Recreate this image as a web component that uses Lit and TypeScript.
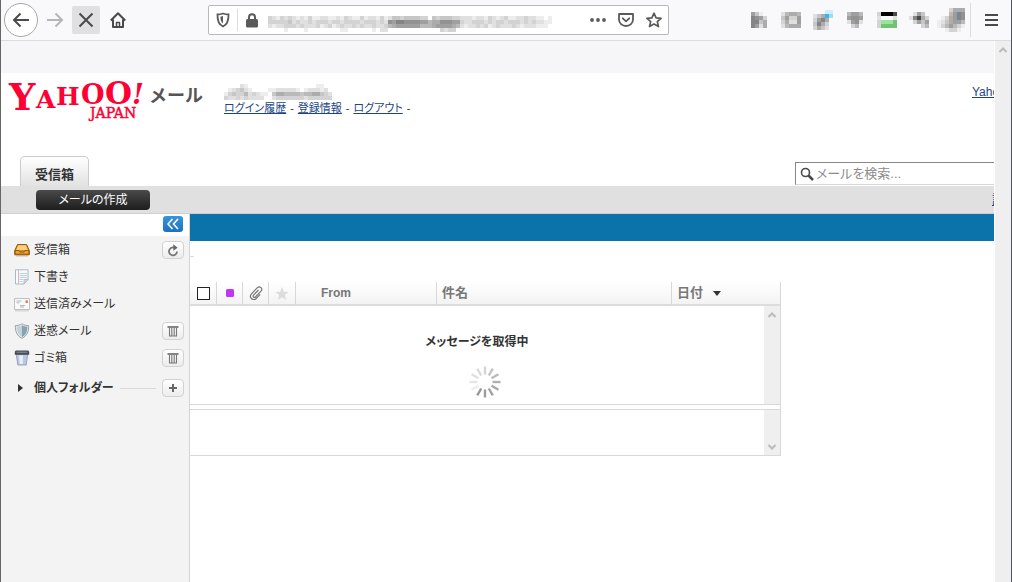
import { LitElement, html, svg, css } from "lit";
import { customElement, property } from "lit/decorators.js";

/* Colour for one mosaic cell: digits are shades of grey, letters are tints. */
const TINTS: Record<string, string> = {
  k: "#4a4a4a", x: "#000000", b: "#cdeefb", c: "#9bdcf6", d: "#3cb4ea",
  g: "#98e698", h: "#74c274", s: "#75879a", t: "#a39a90",
};
const shade = (c: string) => {
  if (TINTS[c]) return TINTS[c];
  const v = 250 - Number(c) * 13;
  return `rgb(${v},${v},${v})`;
};

@customElement("pixel-mosaic")
export class PixelMosaic extends LitElement {
  @property({ attribute: false }) rows: string[] = [];
  static styles = css`
    :host { display: block; line-height: 0; }
    svg { display: block; }
  `;
  render() {
    const w = Math.max(...this.rows.map((r) => r.length)) * 4;
    const h = this.rows.length * 4;
    return html`<svg width=${w} height=${h} shape-rendering="crispEdges" aria-hidden="true">
      ${this.rows.map((row, y) =>
        [...row].map((c, x) =>
          c === "0" ? "" : svg`<rect x=${x * 4} y=${y * 4} width="4" height="4" fill=${shade(c)}></rect>`
        )
      )}
    </svg>`;
  }
}

const URL_ROWS = [
  "321323212131122112132113122131244344443304344433222122132123112232211010",
  "333334232232333233233332333232879988887756688877322333232332333232322110",
  "212233323222312312322323223223567777775556777765212232312322232122211100",
  "000010000100000000110000001022000000000000032330000000000000000000000000",
];
const NAME_ROWS = [
  "000021000000000000000001100",
  "012342100001122222101222120",
  "134335232110466555545566432",
  "322323222200233333332333333",
];
const EXTENSIONS = [
  { name: "Library", rows: ["7410", "9873", "9946", "9726"] },
  { name: "Sidebars", rows: ["25665", "47337", "36227", "25666"] },
  { name: "Extension 1", rows: ["000bb", "246dc", "37960", "49630", "36420"] },
  { name: "Extension 2", rows: ["5775", "7887", "2782", "0350"] },
  { name: "Extension 3", rows: ["3xxxk", "20002", "3gggh", "3hhhh"] },
  { name: "Extension 4", rows: ["02740", "29k63", "03747", "00035"] },
  { name: "Extension 5", rows: ["0003666", "0005ts8", "0136ts8", "1246775", "1357531", "0013310"] },
];

const ICONS: Record<string, unknown> = {
  inbox: svg`<path d="M2 14h12" stroke="#c4c4c4"/><path d="M3.500 2.500h9L15.300 8.500v4.300H.7V8.500z" fill="#d98d1d" stroke="#9c5a0a"/>
    <path d="M4.200 3.300h7.600l2 4.700H2.200z" fill="#f7cf80"/><path d="M1.200 8.500H5l1 1.600h4l1-1.600h3.800v3.700H1.200z" fill="#eaa032" stroke="#8a4d08" stroke-width=".8"/>`,
  draft: svg`<path d="M1.500 .8h12.500v9.700l-4 4.500H1.500z" fill="#f7fbff" stroke="#a9b8c6"/><path d="M4.500 1v13.500" stroke="#e79a9a" stroke-width=".8"/>
    <path d="M5.500 4.500h7.500M5.500 6.500h7.500M5.500 8.500h7.500M5.500 10.500h4M5.500 12.500h3" stroke="#b5d0e8"/><path d="M14 10.500l-4 4.500v-4.500z" fill="#d3dce4" stroke="#a9b8c6" stroke-width=".8"/>`,
  sent: svg`<path d="M.5 2.500h15v11H.5z" fill="#fafafa" stroke="#c0c0c0"/><path d="M1 14.800h14" stroke="#ccc"/>
    <path d="M2.500 5h5M2.500 6.800h3M6 9.500h5M6 11h4" stroke="#a7b1ba" stroke-width=".9"/><path d="M11.500 4.300h2.300v2.700h-2.300z" fill="#d9795b"/>`,
  spam: svg`<path d="M8 .8c2 1.300 4.300 1.800 6.600 1.800C14.800 8.500 13 13 8 15.300 3 13 1.200 8.500 1.400 2.600 3.700 2.600 6 2.100 8 .8z" fill="#e6ebee" stroke="#98a2a8"/>
    <path d="M8 2.200c1.800 1 3.500 1.400 5.400 1.500C13.400 8.500 12 12 8 14z" fill="#86a3b2"/><path d="M8 2.200v11.800C4.500 12 3 9 2.700 3.700 4.500 3.600 6.200 3.200 8 2.200z" fill="#c3d1d8"/>`,
  trash: svg`<path d="M2.200 4h11.600l-1.600 11H3.800z" fill="#b9c7e2" stroke="#8b98b4" stroke-width=".8"/><path d="M5 5.500h4l-.3 8.500H5.800z" fill="#eaf0fb"/>
    <path d="M.8 1.800l1-1.200h12.400l1 1.200v2.900H.8z" fill="#454b55"/><path d="M2.500 1.700h11v1h-11z" fill="#8e96a3"/>`,
};

const ACTIONS: Record<string, unknown> = {
  reload: svg`<path d="M11 8.500A4 4 0 1 1 8 4.500" fill="none" stroke="#777" stroke-width="1.800"/><path d="M7.300 1.300l4.300 3.400-4.300 3z" fill="#666"/>`,
  empty: svg`<path d="M1.500 3h11" stroke="#777" stroke-width="1.800"/><path d="M3.500 4v8h7V4M5.800 4v8M8.200 4v8" fill="none" stroke="#777" stroke-width="1.100"/>`,
  add: svg`<path d="M7 3v8M3 7h8" stroke="#666" stroke-width="2"/>`,
};

@customElement("folder-row")
export class FolderRow extends LitElement {
  @property() icon = "";
  @property() label = "";
  @property() action = "";
  @property({ attribute: "action-label" }) actionLabel = "";
  static styles = css`
    :host { display: flex; align-items: center; height: 27px; padding: 0 5px 0 13px; font-size: 12px; }
    .name { flex: 1; display: flex; align-items: center; gap: 4px; color: #333; text-decoration: none; }
    .icon { width: 16px; height: 16px; }
    .tool { display: grid; place-items: center; width: 22px; height: 18px; padding: 0; box-sizing: border-box;
      border: 1px solid #d2d2d2; border-radius: 4px; background: linear-gradient(#fff, #ececec); }
  `;
  render() {
    return html`<a class="name" href="#"><svg class="icon" viewBox="0 0 16 16" aria-hidden="true">${ICONS[this.icon]}</svg>${this.label}</a>
      ${this.action
        ? html`<button class="tool" aria-label=${this.actionLabel}><svg width="14" height="14" viewBox="0 0 14 14">${ACTIONS[this.action]}</svg></button>`
        : ""}`;
  }
}

const FOLDERS = [
  { icon: "inbox", label: "受信箱", action: "reload", hint: "更新" },
  { icon: "draft", label: "下書き", action: "", hint: "" },
  { icon: "sent", label: "送信済みメール", action: "", hint: "" },
  { icon: "spam", label: "迷惑メール", action: "empty", hint: "空にする" },
  { icon: "trash", label: "ゴミ箱", action: "empty", hint: "空にする" },
];

const SPOKES = ["#d4d4d4", "#c4c4c4", "#bababa", "#b0b0b0", "#a8a8a8", "#a2a2a2", "#9c9c9c", "#989898", "#ececec", "#e6e6e6", "#e0e0e0", "#dadada"];

@customElement("app-root")
export class AppRoot extends LitElement {
  static styles = css`
    :host { display: flex; flex-direction: column; min-height: 100vh; box-sizing: border-box;
      border-left: 1px solid #666; border-right: 1px solid #4a5560; background: #fff; color: #333;
      font: 13px/16px "Liberation Sans", "Noto Sans CJK JP", sans-serif; font-feature-settings: "palt"; }
    button, input { font: inherit; color: inherit; }
    a { color: #1c4587; }
    svg { display: block; }

    .browser { display: flex; align-items: center; height: 40px; padding-left: 3px; background: #f9f9fb; border-bottom: 1px solid #dcdcde; }
    .nav { display: grid; place-items: center; width: 28px; height: 28px; padding: 0; border: 0; border-radius: 2px; background: none; }
    .navs { display: flex; align-items: center; gap: 4px; }
    .back { width: 34px; height: 34px; border: 1px solid #a8a8a8; border-radius: 50%; background: #fff; }
    .forward { width: 26px; }
    .stop { background: #e0e0e2; }
    .address { position: relative; display: flex; align-items: center; flex: 0 1 461px; height: 30px; margin-left: 76px; padding: 0 0 0 3px;
      box-sizing: border-box; border: 1px solid #b9b9bb; border-radius: 2px; background: #fff; }
    .address .nav { height: 22px; }
    .address .shield { width: 22px; }
    .address .lock { margin-left: 3px; border-left: 1px solid #ddd; border-radius: 0; }
    .url { flex: 1; min-width: 0; height: 24px; border: 0; padding: 0 4px; outline: 0; background: none; }
    .veil { position: absolute; left: 59px; top: 10px; }
    .extensions { display: flex; align-items: center; margin-left: auto; height: 34px; padding-right: 3px; border-right: 1px solid #ddd; }
    .extension { display: grid; place-items: center; width: 32px; height: 32px; padding: 0; border: 0; background: none; }
    .menu { width: 40px; }

    .viewport { display: flex; flex: 1; }
    .window { flex: 1; min-width: 0; display: flex; flex-direction: column; overflow: hidden; }
    .page { display: flex; flex-direction: column; flex: 1; width: calc(100% + 60px); }
    .scroll { display: flex; justify-content: center; width: 17px; padding-top: 6px; box-sizing: border-box;
      border-left: 1px solid #fff; background: #efefef; }

    .banner { height: 32px; background: #f6f6f8; }
    .masthead { display: flex; align-items: flex-start; height: 83px; padding-left: 7px; }
    .logo { margin-top: 6px; overflow: visible; }
    .product { margin: 10px 0 0 4px; font-size: 18px; line-height: 26px; font-weight: 700; color: #555; font-feature-settings: normal; }
    .account { margin: 11px 0 0 21px; font-size: 11px; line-height: 14px; }
    .account nav { display: flex; gap: 4px; margin-top: 1px; }
    .portal { margin: 11px 9px 0 auto; font-size: 12px; width: 73px; white-space: nowrap; }

    .tabs { display: flex; align-items: flex-end; justify-content: space-between; padding: 0 8px 0 19px; }
    .tab { width: 69px; height: 30px; box-sizing: border-box; padding: 6px 0 0; border: 1px solid #ccc; border-bottom: 0;
      border-radius: 5px 5px 0 0; background: linear-gradient(#fff, #e2e2e2); font-weight: 700; }
    .search { display: flex; align-items: center; gap: 2px; width: 251px; height: 23px; margin-bottom: 1px; padding-left: 4px;
      box-sizing: border-box; border: 1px solid #888; border-bottom-color: #d6d6d6; background: #fff; }
    .query { flex: 1; min-width: 0; height: 20px; padding: 0; border: 0; outline: 0; background: none; }
    .query::placeholder { color: #8c8c8c; opacity: 1; }
    .actions { display: flex; align-items: center; justify-content: space-between; height: 27px; padding: 0 36px 0 35px;
      background: #e0e0e0; border-bottom: 1px solid #cfcfcf; }
    .compose { width: 114px; height: 20px; padding: 0; border: 0; border-radius: 4px; color: #fff;
      background: linear-gradient(#4a4a4a, #1d1d1d); font-size: 12px; line-height: 20px; }

    .mail { display: flex; flex: 1; }
    .side { flex: none; width: 189px; box-sizing: border-box; border-right: 1px solid #d4d4d4; background: #f3f3f3; }
    .sidehead { display: flex; justify-content: flex-end; height: 22px; padding: 2px 6px 0 0; box-sizing: border-box; background: #fff; }
    .collapse { display: grid; place-items: center; width: 20px; height: 16px; padding: 0; border: 0; border-radius: 3px;
      background: linear-gradient(#3796e0, #1f70c0); }
    .personal { display: flex; align-items: center; height: 34px; padding: 0 5px 0 17px; font-size: 12px; font-weight: 700; }
    .personal span { margin: 0 6px 0 11px; }
    .rule { flex: 1; height: 1px; background: #d9d9d9; margin-right: 6px; }
    .tool { display: grid; place-items: center; width: 22px; height: 18px; padding: 0; box-sizing: border-box;
      border: 1px solid #d2d2d2; border-radius: 4px; background: linear-gradient(#fff, #ececec); }

    .content { flex: 1; min-width: 0; }
    .bluebar { height: 27px; background: #0b72aa; }
    .strip { height: 41px; padding-top: 15px; box-sizing: border-box; }
    .tick { width: 4px; height: 1px; background: #ddd; }
    .panel { width: 591px; box-sizing: border-box; border-right: 1px solid #d8d8d8; }
    .list { width: 100%; table-layout: fixed; border-collapse: separate; border-spacing: 0; }
    .list th { height: 22px; padding: 0 0 0 5px; text-align: left; color: #777; font-weight: 700;
      border-right: 1px solid #d8d8d8; border-bottom: 2px solid #dcdcdc; background: linear-gradient(#fff, #f3f3f3); }
    .list th.glyph { padding: 0; }
    .list th.from { padding-left: 25px; font-size: 12px; }
    .list th.last { border-right: 0; }
    .list td { padding: 0; height: 98px; vertical-align: top; border-bottom: 1px solid #d8d8d8; }
    .c1 { width: 27px; } .c2 { width: 26px; } .c4 { width: 27px; } .c5 { width: 141px; } .c6 { width: 235px; } .c8 { width: 16px; }
    .glyph svg, .check { margin: 0 auto; }
    .check { appearance: none; display: block; width: 13px; height: 13px; border: 1px solid #222; background: #fff; }
    .date { display: flex; align-items: center; gap: 10px; padding: 0; border: 0; background: none; font-weight: 700; color: #777; }
    .loading { display: flex; flex-direction: column; align-items: center; gap: 16px; padding-top: 28px; font-size: 12px; font-weight: 700; }
    .spinner { margin-left: 17px; }
    .list td.gutter { background: #efefef; padding-top: 6px; height: 92px; }
    .gutter svg { margin: 0 auto; }
    .preview { display: flex; justify-content: flex-end; height: 45px; margin-top: 4px; border-top: 1px solid #d8d8d8; border-bottom: 1px solid #d8d8d8; }
    .preview .rail { display: flex; align-items: flex-end; justify-content: center; width: 16px; padding-bottom: 5px; background: #efefef; }
  `;

  render() {
    return html`
      <header class="browser">
        <div class="navs">
          <button class="nav back" aria-label="戻る"><svg width="18" height="16" fill="none" stroke="#4a4a4a" stroke-width="2"><path d="M17 8H2M8.500 1.500L2 8l6.500 6.500"/></svg></button>
          <button class="nav forward" aria-label="進む"><svg width="18" height="16" fill="none" stroke="#b6b6b8" stroke-width="2"><path d="M1 8h15M9.500 1.500L16 8l-6.500 6.500"/></svg></button>
          <button class="nav stop" aria-label="中止"><svg width="16" height="16" fill="none" stroke="#4a4a4a" stroke-width="2"><path d="M1.500 1.500l13 13M14.500 1.500l-13 13"/></svg></button>
          <button class="nav" aria-label="ホーム"><svg width="16" height="16" fill="none" stroke="#4a4a4a" stroke-width="2" stroke-linejoin="round"><path d="M.8 8.500L8 1.300l7.200 7.200M3 7.500V15h10V7.500"/><path d="M6.500 15v-4.500h3V15" stroke-width="1.500"/></svg></button>
        </div>
        <div class="address">
          <button class="nav shield" aria-label="保護"><svg width="14" height="16" viewBox="0 0 14 16"><path d="M7 1.500c2 .7 3.800 1 5.500 1C12.700 8 11.500 12.500 7 14.500 2.500 12.500 1.300 8 1.500 2.500c1.700 0 3.500-.3 5.500-1z" fill="none" stroke="#5a5a5a" stroke-width="1.800"/><path d="M7 4v7.500C5 10 4.400 7.500 4.400 4.700z" fill="#5a5a5a"/></svg></button>
          <button class="nav lock" aria-label="接続情報"><svg width="12" height="15" viewBox="0 0 12 15"><path d="M3 7V4.200a3 3 0 0 1 6 0V7" fill="none" stroke="#5a5a5a" stroke-width="2"/><rect y="6" width="12" height="8.500" rx="1.500" fill="#5a5a5a"/></svg></button>
          <input class="url" type="text" aria-label="アドレス">
          <pixel-mosaic class="veil" .rows=${URL_ROWS}></pixel-mosaic>
          <button class="nav" aria-label="ページ操作"><svg width="16" height="4" fill="#5a5a5a"><circle cx="2" cy="2" r="1.900"/><circle cx="8" cy="2" r="1.900"/><circle cx="14" cy="2" r="1.900"/></svg></button>
          <button class="nav" aria-label="Pocket"><svg width="16" height="14" fill="none" stroke="#5a5a5a" stroke-width="1.800" stroke-linejoin="round" stroke-linecap="round"><path d="M1 1h14v5.500a7 6.500 0 0 1-14 0z"/><path d="M4.800 5.300L8 8.300l3.200-3"/></svg></button>
          <button class="nav" aria-label="ブックマーク"><svg width="16" height="16" fill="none" stroke="#5a5a5a" stroke-width="1.700" stroke-linejoin="round"><path d="M8 1.200l2.100 4.600 5 .5-3.800 3.300 1.200 5L8 12.100l-4.500 2.500 1.200-5L.9 6.300l5-.5z"/></svg></button>
        </div>
        <div class="extensions">
          ${EXTENSIONS.map((e) => html`<button class="extension" aria-label=${e.name}><pixel-mosaic .rows=${e.rows}></pixel-mosaic></button>`)}
        </div>
        <button class="nav menu" aria-label="メニュー"><svg width="13" height="12" stroke="#4a4a4a" stroke-width="2"><path d="M0 1h13M0 6h13M0 11h13"/></svg></button>
      </header>

      <div class="viewport">
        <div class="window"><div class="page">
          <div class="banner"></div>
          <div class="masthead">
            <svg class="logo" width="137" height="42" role="img" aria-label="YAHOO! JAPAN" fill="#ff0033" font-family="DejaVu Serif, serif" font-weight="700">
              <text y="31" font-size="37"><tspan x="1">Y</tspan><tspan x="28" y="29" font-size="25">A</tspan><tspan x="48" y="26" font-size="25">H</tspan><tspan x="73" y="25" font-size="27">O</tspan><tspan x="97" y="25" font-size="31">O</tspan><tspan x="124" y="25" font-size="27" font-style="italic">!</tspan></text>
              <text x="82" y="39" font-size="14" font-weight="400" stroke="#ff0033" stroke-width=".5">JAPAN</text>
            </svg>
            <div class="product">メール</div>
            <div class="account">
              <pixel-mosaic .rows=${NAME_ROWS}></pixel-mosaic>
              <nav><a href="#">ログイン履歴</a>-<a href="#">登録情報</a>-<a href="#">ログアウト</a>-</nav>
            </div>
            <a class="portal" href="#">Yahoo! JAPAN</a>
          </div>
          <div class="tabs">
            <button class="tab">受信箱</button>
            <div class="search">
              <svg width="14" height="14" fill="none" stroke="#4a4a4a"><circle cx="5.500" cy="5.500" r="4" stroke-width="1.600"/><path d="M8.500 8.500l4.500 4.500" stroke-width="2.500"/></svg>
              <input class="query" type="text" aria-label="メールを検索" placeholder="メールを検索...">
            </div>
          </div>
          <div class="actions">
            <button class="compose">メールの作成</button>
            <a href="#">設定</a>
          </div>

          <div class="mail">
            <aside class="side">
              <div class="sidehead"><button class="collapse" aria-label="閉じる"><svg width="12" height="12" fill="none" stroke="#fff" stroke-width="1.600"><path d="M5.500 1L1 6l4.500 5M11 1L6.500 6l4.500 5"/></svg></button></div>
              ${FOLDERS.map((f) => html`<folder-row icon=${f.icon} label=${f.label} action=${f.action} action-label=${f.hint}></folder-row>`)}
              <div class="personal">
                <svg width="5" height="8"><path d="M0 0l5 4-5 4z" fill="#333"/></svg>
                <span>個人フォルダー</span>
                <i class="rule"></i>
                <button class="tool" aria-label="フォルダーを追加"><svg width="14" height="14">${ACTIONS.add}</svg></button>
              </div>
            </aside>
            <main class="content">
              <div class="bluebar"></div>
              <div class="strip"><div class="tick"></div></div>
              <div class="panel">
                <table class="list">
                  <colgroup><col class="c1"><col class="c2"><col class="c2"><col class="c4"><col class="c5"><col class="c6"><col><col class="c8"></colgroup>
                  <thead><tr>
                    <th class="glyph"><input class="check" type="checkbox" aria-label="すべて選択"></th>
                    <th class="glyph"><svg width="8" height="8"><rect width="8" height="8" rx="1.500" fill="#c136ee"/></svg></th>
                    <th class="glyph"><svg width="14" height="14" fill="none" stroke="#777" stroke-width="1.200"><path d="M9.500 4L4.500 9.200a1.300 1.300 0 0 0 1.900 1.800L12 5.200a2.500 2.500 0 0 0-3.600-3.500L2.500 7.800a3.300 3.300 0 0 0 4.700 4.700l4-4.200"/></svg></th>
                    <th class="glyph"><svg width="14" height="13"><path d="M7 0l1.800 4.700 4.900.3-3.800 3.100 1.200 4.800L7 10.200l-4.100 2.700 1.200-4.800L.3 5l4.900-.3z" fill="#dcdcdc"/></svg></th>
                    <th class="from">From</th>
                    <th>件名</th>
                    <th class="last" colspan="2"><button class="date">日付<svg width="8" height="5"><path d="M0 0h8L4 5z" fill="#333"/></svg></button></th>
                  </tr></thead>
                  <tbody><tr>
                    <td colspan="7"><div class="loading">メッセージを取得中
                      <svg class="spinner" width="32" height="32" stroke-width="2.400">
                        ${SPOKES.map((c, i) => svg`<path d="M16 0.500v8" stroke=${c} transform="rotate(${i * 30} 16 16)"/>`)}
                      </svg></div></td>
                    <td class="gutter"><svg width="8" height="6" fill="none" stroke="#bbb" stroke-width="2"><path d="M.5 5L4 1.500 7.500 5"/></svg></td>
                  </tr></tbody>
                </table>
                <div class="preview"><div class="rail"><svg width="8" height="6" fill="none" stroke="#bbb" stroke-width="2"><path d="M.5 1L4 4.500 7.500 1"/></svg></div></div>
              </div>
            </main>
          </div>
        </div></div>
        <div class="scroll"><svg width="8" height="6" fill="none" stroke="#bbb" stroke-width="2"><path d="M.5 5L4 1.500 7.500 5"/></svg></div>
      </div>
    `;
  }
}
